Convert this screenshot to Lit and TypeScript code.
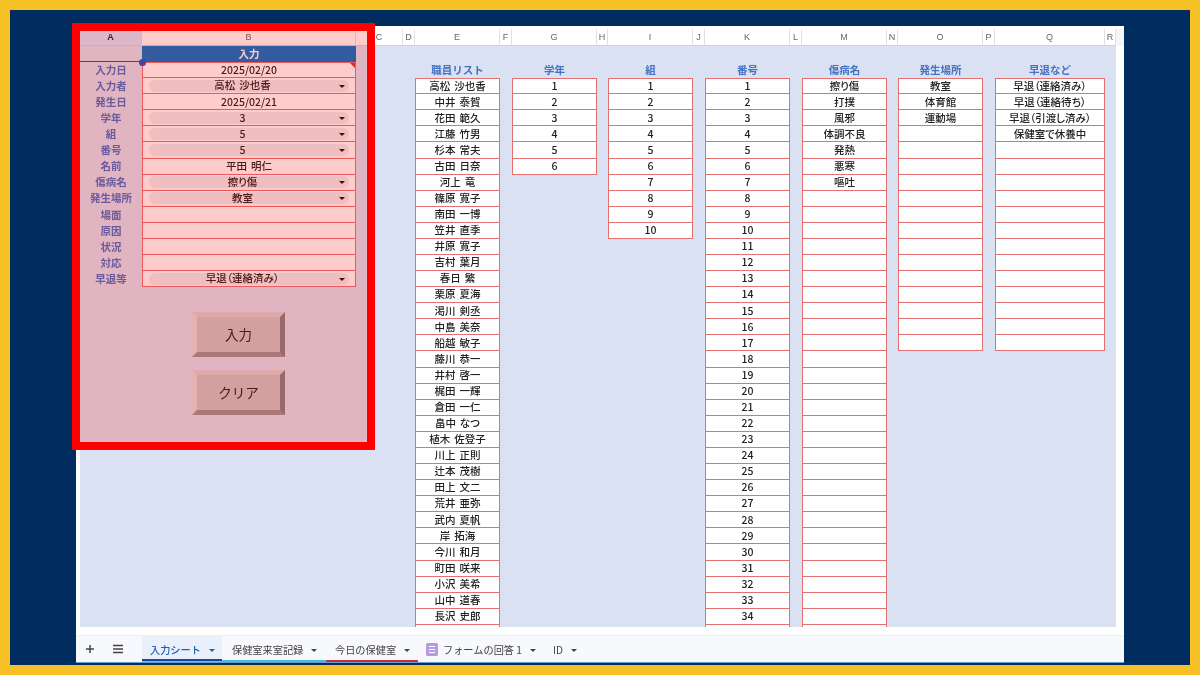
import { LitElement, html, css } from "lit";
import { customElement } from "lit/decorators.js";

const COLS: [string, number][] = [
  ["A", 62], ["B", 214], ["C", 47], ["D", 12], ["E", 85], ["F", 12], ["G", 85], ["H", 11], ["I", 85],
  ["J", 12], ["K", 85], ["L", 12], ["M", 85], ["N", 11], ["O", 85], ["P", 12], ["Q", 110], ["R", 11],
];
const NAMES = "高松 沙也香,中井 泰賀,花田 範久,江藤 竹男,杉本 常夫,古田 日奈,河上 竜,篠原 寛子,南田 一博,笠井 直季,井原 寛子,吉村 葉月,春日 繁,栗原 夏海,渇川 剣丞,中島 美奈,船越 敏子,藤川 恭一,井村 啓一,梶田 一輝,倉田 一仁,畠中 なつ,植木 佐登子,川上 正則,辻本 茂樹,田上 文二,荒井 亜弥,武内 夏帆,岸 拓海,今川 和月,町田 咲来,小沢 美希,山中 道春,長沢 史郎,".split(",");
const nums = (n: number) => Array.from({ length: n }, (_, i) => String(i + 1));
const pad = (a: string[], n: number) => [...a, ...Array(Math.max(0, n - a.length)).fill("")];
const LISTS: { col: number; title: string; items: string[] }[] = [
  { col: 5, title: "職員リスト", items: NAMES },
  { col: 7, title: "学年", items: nums(6) },
  { col: 9, title: "組", items: nums(10) },
  { col: 11, title: "番号", items: pad(nums(34), 35) },
  { col: 13, title: "傷病名", items: pad(["擦り傷", "打撲", "風邪", "体調不良", "発熱", "悪寒", "嘔吐"], 35) },
  { col: 15, title: "発生場所", items: pad(["教室", "体育館", "運動場"], 17) },
  { col: 17, title: "早退など", items: pad(["早退（連絡済み）", "早退（連絡待ち）", "早退（引渡し済み）", "保健室で休養中"], 17) },
];
const FORM: { label: string; value: string; chip?: boolean }[] = [
  { label: "入力日", value: "2025/02/20" },
  { label: "入力者", value: "高松 沙也香", chip: true },
  { label: "発生日", value: "2025/02/21" },
  { label: "学年", value: "3", chip: true },
  { label: "組", value: "5", chip: true },
  { label: "番号", value: "5", chip: true },
  { label: "名前", value: "平田 明仁" },
  { label: "傷病名", value: "擦り傷", chip: true },
  { label: "発生場所", value: "教室", chip: true },
  { label: "場面", value: "" },
  { label: "原因", value: "" },
  { label: "状況", value: "" },
  { label: "対応", value: "" },
  { label: "早退等", value: "早退（連絡済み）", chip: true },
];
const TABS = [
  { name: "入力シート", cls: "active" },
  { name: "保健室来室記録", cls: "cyan" },
  { name: "今日の保健室", cls: "red" },
  { name: "フォームの回答 1", cls: "form", icon: true },
  { name: "ID", cls: "id" },
];

@customElement("app-root")
export class AppRoot extends LitElement {
  static styles = css`
    :host { display: block; width: 1200px; height: 675px; overflow: hidden;
      font-family: "Noto Sans CJK JP", "Liberation Sans", sans-serif; }
    * { box-sizing: border-box; }
    .frame { height: 675px; padding: 10px 10px 10px; background: #f6c127; }
    .navy { height: 655px; background: #012c60; padding: 16px 66px 2px 66px; }
    .win { position: relative; height: 637px; background: #fff; padding: 3px 0 0 4px; display: flex; flex-direction: column; filter: blur(0.4px); }
    .cols { display: grid; height: 17px; flex: none; border-right: 8px solid #f4f6f9; }
    .colh { display: flex; align-items: center; justify-content: center; font: 9px "Liberation Sans", sans-serif;
      color: #666; border-right: 1px solid #dfe1e3; border-bottom: 1px solid #cfd2d6; background: #fff; }
    .colh.sel { background: #d3e6fb; color: #222; font-weight: 700; }
    .sheet { display: grid; height: 581px; flex: none; background: #dae1f2; overflow: hidden; align-items: start; margin-right: 8px; }
    .panel { grid-column: 1 / span 2; position: relative; }
    .row { display: grid; grid-template-columns: 62px 214px; height: 16.09px; }
    .head .b { background: rgb(0, 115, 200); color: #fff; font-weight: 700; font-size: 10.5px; display: flex; align-items: center; justify-content: center; line-height: 1; }
    .lab { display: flex; align-items: center; justify-content: center; color: #4472c4; font-size: 10.5px; font-weight: 700; line-height: 1; white-space: nowrap; }
    .val { position: relative; background: #fff; border: 1px solid #e8706f; border-top: 0;
      display: flex; align-items: center; justify-content: center; font-size: 10.5px; font-weight: 500; color: #222; line-height: 1; word-spacing: 1.5px; }
    .val.first { border-top: 1px solid #e8706f; }
    .chip { width: 200px; height: 12px; border-radius: 6px; background: #ebeef0; display: flex; align-items: center; padding-right: 12px; margin-left: -1px; position: relative; font-feature-settings: "palt"; }
    .chip span { flex: 1; text-align: center; }
    .chip i { position: absolute; right: 4px; top: 5px; width: 0; height: 0; border-style: solid; border-color: #111 transparent transparent; border-width: 3px 3.5px 0; }
    .note { position: absolute; top: 0; right: 0; border-top: 5px solid #d93025; border-left: 5px solid transparent; }
    .selline { position: absolute; left: 0; top: 15px; width: 62px; height: 1px; background: #1a4fc0; }
    .seldot { position: absolute; left: 59px; top: 13px; width: 7px; height: 7px; border-radius: 50%; background: #0a5ad0; }
    .btns { display: flex; flex-direction: column; gap: 13px; padding: 25px 0 0 112px; }
    .btn { width: 93px; height: 45px; border: 5.5px solid; border-color: #d8d4d4 #808282 #959696 #e0dede; background: #c7c8c8;
      display: flex; align-items: center; justify-content: center; font-size: 13.5px; color: #222; line-height: 1; }
    .list { display: flex; flex-direction: column; }
    .title { height: 16.09px; margin-top: 16.09px; display: flex; align-items: center; justify-content: center; color: #4472c4; font-weight: 700; font-size: 10.5px; line-height: 1; white-space: nowrap; }
    .cell { height: 16.09px; background: #fff; border: 1px solid #e4716f; border-top: 0; display: flex; align-items: center; justify-content: center;
      font-size: 10.5px; font-weight: 500; color: #222; line-height: 1; white-space: nowrap; flex: none; word-spacing: 1.5px; font-feature-settings: "palt"; }
    .cell.first { border-top: 1px solid #e4716f; }
    .gap { height: 9px; flex: none; border-bottom: 1px solid #eceef0; background: #fff; margin-left: -4px; }
    .tabs { flex: 1; margin-left: -4px; background: #f8f9fc; display: flex; align-items: stretch; border-bottom: 1px solid #6f9bd0; color: #444; font-size: 10.2px; }
    .tool { width: 28px; display: flex; align-items: center; justify-content: center; flex: none; }
    .tool svg { display: block; }
    .tab { display: flex; align-items: center; flex: none; position: relative; white-space: nowrap; line-height: 1; padding-top: 2px; }
    .tab b { font-weight: 400; }
    .tab i { width: 0; height: 0; border-style: solid; border-color: #444 transparent transparent; border-width: 3px 3px 0; margin-left: 8px; }
    .tab.active { width: 80px; background: #e9f0fb; color: #1d5fb8; padding-left: 8px; margin-left: 10px; }
    .tab.active b { font-weight: 500; }
    .tab.active i { border-top-color: #1d5fb8; }
    .tab.active::after { content: ""; position: absolute; left: 0; right: 0; bottom: 0; height: 3px; background: linear-gradient(#0f4f96 50%, #5fc0e6 50%); }
    .tab.cyan { width: 104px; padding-left: 10px; }
    .tab.cyan::after { content: ""; position: absolute; left: 0; right: 0; bottom: 0; height: 2px; background: #45bcdc; }
    .tab.red { width: 92px; padding-left: 9px; }
    .tab.red::after { content: ""; position: absolute; left: 0; right: 0; bottom: 0; height: 2px; background: #c2303f; }
    .tab.form { padding-left: 8px; width: 127px; }
    .tab.form svg { margin-right: 5px; margin-top: -2px; }
    .tab.id { padding-left: 8px; }
    .overlay { position: absolute; left: -4px; top: -3px; width: 303px; height: 427px; border: 8px solid #fe0000; background: rgba(255, 0, 0, 0.2); pointer-events: none; }
  `;

  render() {
    const tpl = COLS.map((c) => c[1] + "px").join(" ");
    return html`<div class="frame"><div class="navy"><div class="win">
      <div class="cols" style="grid-template-columns:${tpl}">
        ${COLS.map((c, i) => html`<div class="colh ${i === 0 ? "sel" : ""}">${c[0]}</div>`)}
      </div>
      <div class="sheet" style="grid-template-columns:${tpl}">
        <div class="panel">
          <div class="row head"><div class="a"></div><div class="b">入力</div></div>
          ${FORM.map((f, i) => html`<div class="row">
            <div class="lab">${f.label}</div>
            <div class="val ${i === 0 ? "first" : ""}">
              ${f.chip ? html`<div class="chip"><span>${f.value}</span><i></i></div>` : f.value}
              ${i === 0 ? html`<div class="note"></div>` : ""}
            </div>
          </div>`)}
          <div class="selline"></div><div class="seldot"></div>
          <div class="btns"><div class="btn">入力</div><div class="btn">クリア</div></div>
        </div>
        ${LISTS.map((l) => html`<div class="list" style="grid-column:${l.col}">
          <div class="title">${l.title}</div>
          ${l.items.map((t, i) => html`<div class="cell ${i === 0 ? "first" : ""}">${t}</div>`)}
        </div>`)}
      </div>
      <div class="gap"></div>
      <div class="tabs">
        <div class="tool"><svg width="10" height="10" viewBox="0 0 10 10"><path d="M5 1v8M1 5h8" stroke="#444" stroke-width="1.5" fill="none"/></svg></div>
        <div class="tool"><svg width="12" height="10" viewBox="0 0 12 10"><path d="M1 1.5h10M1 5h10M1 8.5h10" stroke="#444" stroke-width="1.5" fill="none"/></svg></div>
        ${TABS.map((t) => html`<div class="tab ${t.cls}">
          ${t.icon ? html`<svg width="12" height="13" viewBox="0 0 12 13"><rect width="12" height="13" rx="1.5" fill="#b79be0"/><path d="M3 3.5h6M3 6.5h6M3 9.5h6" stroke="#fff" stroke-width="1.2"/></svg>` : ""}
          <b>${t.name}</b><i></i></div>`)}
      </div>
      <div class="overlay"></div>
    </div></div></div>`;
  }
}
